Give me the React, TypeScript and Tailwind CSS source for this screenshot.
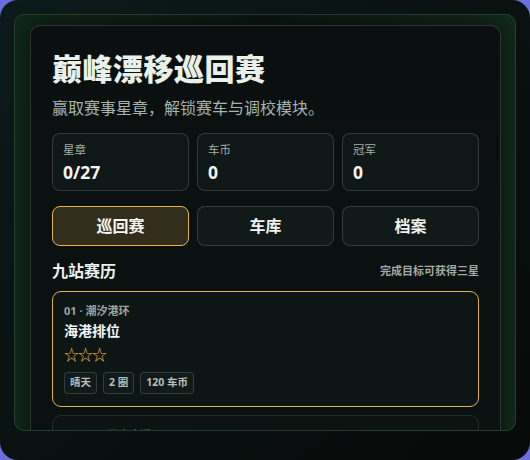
import React from "react";

const stats = [
  { label: "星章", value: "0/27" },
  { label: "车币", value: "0" },
  { label: "冠军", value: "0" },
];

const tabs = ["巡回赛", "车库", "档案"];

const tags = ["晴天", "2 圈", "120 车币"];

const font = {
  fontFamily: '"Noto Sans", "Noto Sans CJK SC", sans-serif',
};

export default function App() {
  const active = 0;

  return (
    <div className="w-[530px] h-[460px] bg-[#6b6fdc]" style={font}>
      <div className="h-full rounded-[18px] bg-gradient-to-br from-[#0c1a1b] via-[#0a1111] to-[#070a09] px-[14px] pt-[14px] pb-[29px]">
        <div className="h-full overflow-hidden rounded-[10px] border border-[#2a4a35]/70 bg-gradient-to-r from-[#10281b] via-[#0d1613] to-[#122a1c] pt-[10px] pl-[15px] pr-[14px]">
          <div className="rounded-[10px] border border-white/15 bg-gradient-to-b from-[#0b0f0f] to-[#0b1111] px-[21px] pt-[24px] pb-6 shadow-[0_0_24px_rgba(0,0,0,0.6)]">
            <h1 className="text-[30px] leading-[38px] font-black text-[#eaf1ea] tracking-[0.5px]">
              巅峰漂移巡回赛
            </h1>
            <p className="mt-[10px] text-[16px] leading-[20px] text-[#a7b3ab]">
              赢取赛事星章，解锁赛车与调校模块。
            </p>

            <div className="mt-[15px] grid grid-cols-3 gap-2">
              {stats.map((s) => (
                <div
                  key={s.label}
                  className="h-[58px] rounded-[8px] border border-white/15 bg-[#0f1817] px-[10px] pt-[9px]"
                >
                  <div className="text-[11.5px] leading-[14px] text-[#a3aea7]">{s.label}</div>
                  <div className="mt-[4px] text-[17.5px] leading-[22px] font-bold text-[#f2f5f2]">
                    {s.value}
                  </div>
                </div>
              ))}
            </div>

            <div className="mt-[15px] grid grid-cols-3 gap-2">
              {tabs.map((t, i) => (
                <button
                  key={t}
                  className={`h-[40px] rounded-[8px] border text-[16px] font-bold text-[#f2f4ef] ${
                    i === active
                      ? "border-[#e2b64a] bg-[#332d1b]"
                      : "border-white/15 bg-[#111a19]"
                  }`}
                >
                  {t}
                </button>
              ))}
            </div>

            <div className="mt-[14px] flex items-center justify-between">
              <div className="text-[16px] leading-[22px] font-bold text-[#eef2ee]">九站赛历</div>
              <div className="text-[11px] leading-[14px] font-bold text-[#a3aca6]">完成目标可获得三星</div>
            </div>

            <div className="mt-[9px] rounded-[9px] border-[1.5px] border-[#e3b24a] bg-[#0e1515] px-[11px] pt-[12px] pb-[12px]">
              <div className="text-[11px] leading-[14px] font-bold text-[#9ba59f]">01 · 潮汐港环</div>
              <div className="mt-[4px] text-[14px] leading-[18px] font-bold text-[#f3f5f2]">海港排位</div>
              <div className="mt-[5px] text-[15px] leading-[18px] text-[#e3b23c] tracking-[-1px]">☆☆☆</div>
              <div className="mt-[9px] flex gap-[6px]">
                {tags.map((tag) => (
                  <span
                    key={tag}
                    className="h-[22px] flex items-center rounded-[4px] border border-white/15 bg-white/[0.02] px-[5px] text-[10.5px] font-bold text-[#b7bfb9]"
                  >
                    {tag}
                  </span>
                ))}
              </div>
            </div>

            <div className="mt-[8px] rounded-[9px] border border-white/10 bg-[#0d1313] px-[11px] pt-[12px] pb-[10px]">
              <div className="pl-[22px] text-[11px] leading-[14px] font-bold text-[#5d6661]">02 · 雨夜山道</div>
            </div>
          </div>
        </div>
      </div>
    </div>
  );
}
